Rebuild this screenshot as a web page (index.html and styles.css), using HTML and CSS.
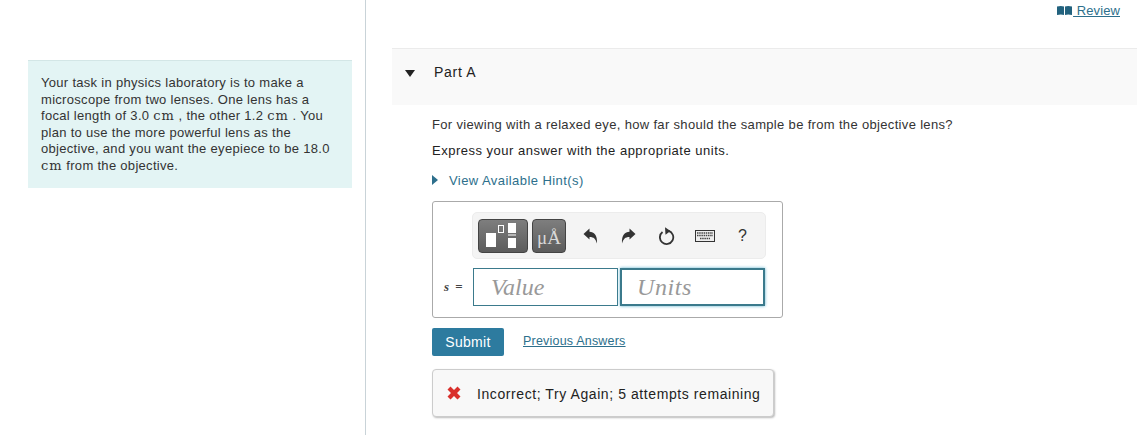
FILE: index.html
```html
<!DOCTYPE html>
<html lang="en">
<head>
    <meta charset="UTF-8">
    <meta name="viewport" content="width=device-width, initial-scale=1.0">
    <title>Part A</title>
    <link rel="stylesheet" href="styles.css">
</head>
<body>
    <aside class="left-col">
        <div class="intro">
            Your task in physics laboratory is to make a<br>
            microscope from two lenses. One lens has a<br>
            focal length of 3.0 <span class="math">cm</span> , the other 1.2 <span class="math">cm</span> . You<br>
            plan to use the more powerful lens as the<br>
            objective, and you want the eyepiece to be 18.0<br>
            <span class="math">cm</span> from the objective.
        </div>
    </aside>

    <main class="right-col">
        <div class="top-bar">
            <a class="review" href="#">
                <svg class="book-icon" width="15" height="9" viewBox="0 0 15 9"><path d="M0 0.500 Q4 -0.500 7 0.500 V9 Q4 8 0 9Z M8 0.500 Q11 -0.500 15 0.500 V9 Q11 8 8 9Z" fill="#22627e"/></svg>
                <span>&nbsp;Review</span>
            </a>
        </div>

        <section class="part-head">
            <span class="down-arrow"></span>
            <span class="part-title">Part A</span>
        </section>

        <section class="part-body">
            <p class="question">For viewing with a relaxed eye, how far should the sample be from the objective lens?</p>
            <p class="instruction">Express your answer with the appropriate units.</p>
            <a class="hints" href="#"><span class="right-arrow"></span>View Available Hint(s)</a>

            <div class="answer-box">
                <div class="toolbar">
                    <div class="tool-btn templates">
                        <svg width="50" height="34" viewBox="0 0 50 34">
                            <rect x="8" y="14" width="10" height="14" fill="#fff"/>
                            <rect x="20.500" y="6.500" width="5" height="7" fill="none" stroke="#fff" stroke-width="1"/>
                            <rect x="30" y="4" width="8" height="10" fill="#fff"/>
                            <rect x="30" y="15.500" width="8" height="1" fill="#fff"/>
                            <rect x="30" y="19" width="8" height="10" fill="#fff"/>
                        </svg>
                    </div>
                    <div class="tool-btn symbols">&mu;&Aring;</div>
                    <svg class="tool-icon" width="15" height="16" viewBox="0 0 15 16"><path d="M0.500 6 L6.500 0.500 V3.800 C11 3.800 14.500 7 14 15.500 C12.500 11 11 9 6.500 9 V11.500Z" fill="#333"/></svg>
                    <svg class="tool-icon redo" width="15" height="16" viewBox="0 0 15 16"><path d="M14.500 6 L8.500 0.500 V3.800 C4 3.800 0.500 7 1 15.500 C2.500 11 4 9 8.500 9 V11.500Z" fill="#333"/></svg>
                    <svg class="tool-icon reload" width="16" height="18" viewBox="0 0 16 18"><path d="M9.500 3.900 A6.700 6.700 0 1 1 3.500 5" fill="none" stroke="#333" stroke-width="1.800"/><path d="M6 0.300 L11.500 4 L6.500 7.800Z" fill="#333"/></svg>
                    <svg class="tool-icon keyboard" width="20" height="12" viewBox="0 0 20 12">
                        <rect x="0.500" y="0.500" width="19" height="11" fill="#eee" stroke="#333"/>
                        <path d="M2 3 H18 M2 5.500 H18 M5 8.500 H15" stroke="#444" stroke-width="1.300" stroke-dasharray="1.500 0.700"/>
                    </svg>
                    <span class="help">?</span>
                </div>
                <div class="input-row">
                    <span class="var-label"><i>s</i> =</span>
                    <div class="field">Value</div>
                    <div class="field focused">Units</div>
                </div>
            </div>

            <div class="actions">
                <button class="submit">Submit</button>
                <a class="prev" href="#">Previous Answers</a>
            </div>

            <div class="feedback">
                <svg class="x-icon" width="14" height="14" viewBox="0 0 14 14"><path d="M0.500 3.500 L3.500 0.500 L7 4 L10.500 0.500 L13.500 3.500 L10 7 L13.500 10.500 L10.500 13.500 L7 10 L3.500 13.500 L0.500 10.500 L4 7Z" fill="#d9302c"/></svg>
                <span class="feedback-text">Incorrect; Try Again; 5 attempts remaining</span>
            </div>
        </section>
    </main>
</body>
</html>
```

FILE: styles.css
```css
html, body {
    height: 100%;
}

body {
    margin: 0;
    display: flex;
    height: 435px;
    overflow: hidden;
    font-family: "Liberation Sans", Arial, sans-serif;
    font-size: 13px;
    color: #333;
    background: #fff;
}

a {
    color: #2d6f8c;
}

.left-col {
    width: 366px;
    flex-shrink: 0;
    box-sizing: border-box;
    border-right: 1px solid #c9d3d8;
    padding: 60px 13px 0 28px;
}

.intro {
    background: #e3f4f4;
    border-top: 1px solid #d3e6e6;
    padding: 14px 12px 13px 13px;
    line-height: 16.6px;
    letter-spacing: 0.3px;
    white-space: nowrap;
}

.math {
    font-family: "DejaVu Serif", serif;
    font-size: 13px;
    letter-spacing: 0.9px;
    line-height: 1;
}

.right-col {
    flex: 1;
    min-width: 0;
    padding-left: 26px;
}

.top-bar {
    height: 48px;
    box-sizing: border-box;
    padding: 3px 17px 0 0;
    display: flex;
    justify-content: flex-end;
}

.review {
    display: flex;
    align-items: center;
    height: 15px;
    text-decoration: none;
}

.book-icon {
    margin-right: 1px;
}

.review span {
    text-decoration: underline;
    letter-spacing: 0.1px;
}

.part-head {
    height: 57px;
    box-sizing: border-box;
    border-top: 1px solid #ebebeb;
    background: #f9f9f9;
    display: flex;
    align-items: flex-start;
    padding: 15px 0 0 13px;
    color: #222;
}

.down-arrow {
    width: 0;
    height: 0;
    margin-top: 6px;
    border-left: 5.500px solid transparent;
    border-right: 5.500px solid transparent;
    border-top: 7px solid #222;
}

.part-title {
    margin-left: 19px;
    font-size: 14px;
    letter-spacing: 0.7px;
}

.part-body {
    padding: 12px 0 0 40px;
}

.question, .instruction {
    margin: 0;
    line-height: 16px;
    letter-spacing: 0.33px;
}

.instruction {
    margin-top: 10px;
    color: #222;
    letter-spacing: 0.5px;
}

.hints {
    display: flex;
    align-items: center;
    margin-top: 13px;
    height: 16px;
    text-decoration: none;
    letter-spacing: 0.43px;
}

.right-arrow {
    width: 0;
    height: 0;
    margin-right: 11px;
    border-top: 5px solid transparent;
    border-bottom: 5px solid transparent;
    border-left: 6px solid #2d6f8c;
}

.answer-box {
    margin-top: 13px;
    width: 351px;
    height: 117px;
    box-sizing: border-box;
    border: 1px solid #aaa;
    border-radius: 3px;
    padding: 10px 16px 0 10px;
}

.toolbar {
    margin-left: 29px;
    height: 47px;
    box-sizing: border-box;
    background: #f4f4f4;
    border: 1px solid #ececec;
    border-radius: 5px;
    display: flex;
    align-items: center;
    padding-left: 5px;
}

.tool-btn {
    height: 34px;
    box-sizing: border-box;
    border: 1px solid #444;
    border-radius: 4px;
    background: linear-gradient(#7e7e7e, #5c5c5c);
    color: #d8d8d8;
    display: flex;
    align-items: center;
    justify-content: center;
}

.tool-btn svg {
    flex: none;
}

.templates {
    width: 50px;
}

.symbols {
    width: 34px;
    margin-left: 4px;
    margin-right: 17px;
    padding-top: 5px;
    font-family: "Liberation Serif", serif;
    font-size: 19px;
}

.tool-icon {
    margin-right: 23px;
}

.reload {
    margin-right: 20px;
}

.keyboard {
    margin-right: 0;
}

.help {
    font-size: 16px;
    margin-left: 23px;
}

.input-row {
    display: flex;
    align-items: center;
    margin-top: 9px;
}

.var-label {
    width: 30px;
    padding-left: 1px;
    box-sizing: border-box;
    font-family: "Liberation Serif", serif;
    font-size: 13px;
    font-weight: bold;
    word-spacing: 3px;
    white-space: nowrap;
    color: #444;
}

.field {
    width: 145px;
    height: 38px;
    box-sizing: border-box;
    border: 1px solid #3b7a8c;
    padding-left: 17px;
    font-family: "Liberation Serif", serif;
    font-style: italic;
    font-size: 24px;
    line-height: 36px;
    color: #999;
    background: #fff;
}

.field.focused {
    margin-left: 2px;
    padding-left: 15px;
    border-width: 2px;
    line-height: 34px;
    letter-spacing: 0.6px;
    box-shadow: 0 0 3px #5ab0cc;
}

.actions {
    display: flex;
    align-items: center;
    margin-top: 10px;
}

.submit {
    width: 72px;
    height: 28px;
    border: 0;
    border-radius: 2px;
    background: #2d7b9f;
    color: #fff;
    font-family: inherit;
    font-size: 14px;
    letter-spacing: 0.3px;
    padding: 0;
}

.prev {
    margin-left: 19px;
    margin-top: -2px;
    font-size: 12.500px;
    letter-spacing: 0.2px;
}

.feedback {
    margin-top: 13px;
    width: 342px;
    height: 48px;
    box-sizing: border-box;
    border: 1px solid #ccc;
    border-radius: 4px;
    background: #f8f8f8;
    box-shadow: 1px 1px 2px #bbb;
    display: flex;
    align-items: center;
    padding-left: 14px;
    color: #222;
    font-size: 14px;
    letter-spacing: 0.58px;
    white-space: nowrap;
}

.feedback-text {
    padding-top: 2px;
}

.x-icon {
    margin-right: 16px;
}
```
